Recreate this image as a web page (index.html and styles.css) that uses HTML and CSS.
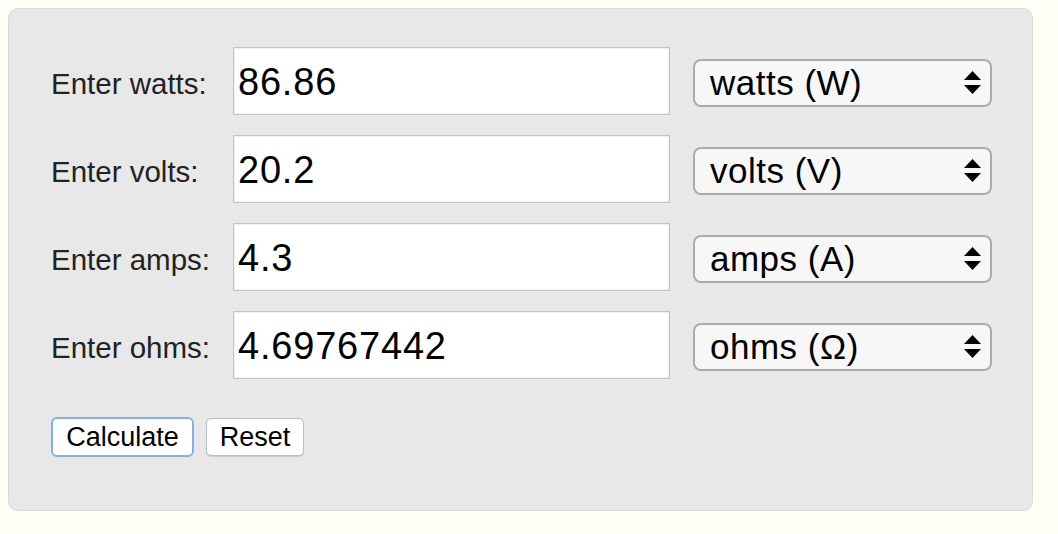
FILE: index.html
```html
<!DOCTYPE html>
<html>
<head>
<meta charset="utf-8">
<link rel="stylesheet" href="styles.css">
</head>
<body>
<div class="panel">
  <div class="rows">
    <div class="row">
      <div class="label">Enter watts:</div>
      <div class="field">86.86</div>
      <div class="select"><span class="sel-text">watts (W)</span><svg class="arrows" width="17" height="23" viewBox="0 0 17 23"><polygon points="8.5,0 17,9 0,9" /><polygon points="0,14 17,14 8.5,23" /></svg></div>
    </div>
    <div class="row">
      <div class="label">Enter volts:</div>
      <div class="field">20.2</div>
      <div class="select"><span class="sel-text">volts (V)</span><svg class="arrows" width="17" height="23" viewBox="0 0 17 23"><polygon points="8.5,0 17,9 0,9" /><polygon points="0,14 17,14 8.5,23" /></svg></div>
    </div>
    <div class="row">
      <div class="label">Enter amps:</div>
      <div class="field">4.3</div>
      <div class="select"><span class="sel-text">amps (A)</span><svg class="arrows" width="17" height="23" viewBox="0 0 17 23"><polygon points="8.5,0 17,9 0,9" /><polygon points="0,14 17,14 8.5,23" /></svg></div>
    </div>
    <div class="row">
      <div class="label">Enter ohms:</div>
      <div class="field">4.69767442</div>
      <div class="select"><span class="sel-text">ohms (Ω)</span><svg class="arrows" width="17" height="23" viewBox="0 0 17 23"><polygon points="8.5,0 17,9 0,9" /><polygon points="0,14 17,14 8.5,23" /></svg></div>
    </div>
  </div>
  <div class="buttons">
    <div class="btn btn-focus">Calculate</div>
    <div class="btn btn-reset">Reset</div>
  </div>
</div>
</body>
</html>
```
FILE: styles.css
```css
html, body {
  margin: 0;
  padding: 0;
  background: #fffef6;
}
body {
  font-family: "Liberation Sans", Arial, sans-serif;
  width: 1058px;
  height: 534px;
  overflow: hidden;
}
.panel {
  margin: 8px 0 0 8px;
  width: 1025px;
  height: 503px;
  box-sizing: border-box;
  background: #e8e8e8;
  border: 1px solid #dadada;
  border-radius: 10px;
  padding: 38px 0 0 42px;
}
.rows {
  display: flex;
  flex-direction: column;
  gap: 20px;
}
.row {
  display: flex;
  align-items: center;
  height: 68px;
}
.label {
  width: 182px;
  font-size: 29.5px;
  color: #222;
  padding-top: 5px;
}
.field {
  width: 437px;
  height: 68px;
  box-sizing: border-box;
  background: #fff;
  border: 1px solid #c4c4c4;
  box-shadow: inset 0 0 0 1px #f0f0f0;
  font-size: 38px;
  letter-spacing: 0.8px;
  color: #000;
  padding: 2px 0 0 4px;
  display: flex;
  align-items: center;
}
.select {
  margin-left: 23px;
  margin-top: 3px;
  width: 299px;
  height: 48px;
  box-sizing: border-box;
  border: 2px solid #ababab;
  border-radius: 8px;
  background: #f7f7f7;
  display: flex;
  align-items: center;
  justify-content: space-between;
  padding: 0 9px 0 15px;
}
.sel-text {
  font-size: 35px;
  letter-spacing: 0.5px;
  color: #000;
}
.arrows {
  fill: #000;
  display: block;
}
.buttons {
  display: flex;
  align-items: center;
  gap: 12px;
  margin-top: 38px;
}
.btn {
  box-sizing: border-box;
  background: #fff;
  font-size: 27px;
  color: #000;
  display: flex;
  align-items: center;
  justify-content: center;
}
.btn-focus {
  width: 143px;
  height: 40px;
  border: 2px solid #84b0ea;
  border-radius: 6px;
}
.btn-reset {
  width: 98px;
  height: 38px;
  border: 1px solid #bdbdbd;
  border-radius: 5px;
  box-shadow: 0 1px 1px rgba(0,0,0,0.12);
}
```
